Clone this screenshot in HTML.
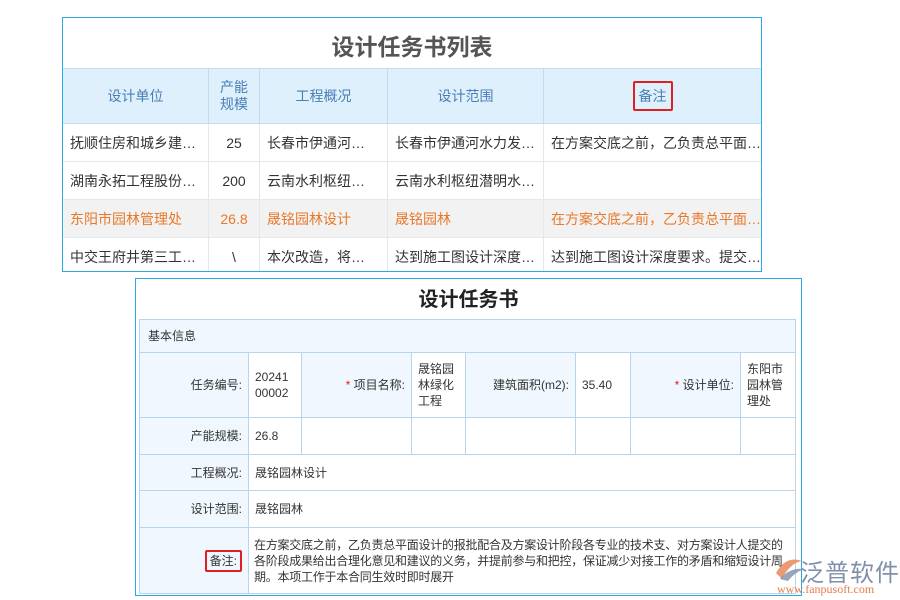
<!DOCTYPE html>
<html><head><meta charset="utf-8"><style>
*{margin:0;padding:0;box-sizing:border-box}
body{width:900px;height:600px;background:#fff;position:relative;overflow:hidden;font-family:"Liberation Sans","Noto Sans CJK SC",sans-serif;font-size:13px;color:#333}
.abs{position:absolute}
.p1{left:62px;top:17px;width:700px;height:255px;border:1px solid #29a8e6;overflow:hidden}
.t1{position:absolute;left:0;right:0;top:10px;text-align:center;font-size:23px;font-weight:bold;color:#555}
table{border-collapse:collapse;position:absolute}
.tb1{left:-1px;top:50px;width:699px;table-layout:fixed;font-size:14px}
.tb1 td{border:1px solid #e3e8ee;padding:0 7px;white-space:nowrap;overflow:hidden}
.tb1 tr.h td{background:#dff0fd;color:#4a7eb5;text-align:center;height:55px;border-color:#c4dcf0}
.tb1 tr.r td{height:38px}
.tb1 tr.o td{background:#f2f2f2;color:#e8792a}
.c{text-align:center}
.p2{left:135px;top:278px;width:667px;height:318px;border:1px solid #29a8e6}
.t2{position:absolute;left:0;right:0;top:4px;text-align:center;font-size:20px;font-weight:bold;color:#222}
.tb2{left:3px;top:40px;width:656px;table-layout:fixed}
.tb2 td{border:1px solid #b9d5ee;padding:0 6px;font-size:12px;vertical-align:middle;line-height:16px}
.tb2 td.l{background:#f0f7fe;text-align:right}
.s{color:#e02020}
.red{border:2px solid #e02020;border-radius:2px;padding:1px 4px}
</style></head><body>
<div class="abs p1">
<div class="t1">设计任务书列表</div>
<table class="tb1">
<colgroup><col style="width:146px"><col style="width:51px"><col style="width:128px"><col style="width:156px"><col style="width:218px"></colgroup>
<tr class="h"><td>设计单位</td><td style="line-height:17px;padding:0">产能<br>规模</td><td>工程概况</td><td>设计范围</td><td><span class="red" style="padding:5px 4px">备注</span></td></tr>
<tr class="r"><td>抚顺住房和城乡建…</td><td class="c">25</td><td>长春市伊通河…</td><td>长春市伊通河水力发…</td><td>在方案交底之前，乙负责总平面…</td></tr>
<tr class="r"><td>湖南永拓工程股份…</td><td class="c">200</td><td>云南水利枢纽…</td><td>云南水利枢纽潜明水…</td><td></td></tr>
<tr class="r o"><td>东阳市园林管理处</td><td class="c">26.8</td><td>晟铭园林设计</td><td>晟铭园林</td><td>在方案交底之前，乙负责总平面…</td></tr>
<tr class="r"><td style="height:34px">中交王府井第三工…</td><td class="c">\</td><td>本次改造，将…</td><td>达到施工图设计深度…</td><td>达到施工图设计深度要求。提交…</td></tr>
</table>
</div>
<div class="abs p2">
<div class="t2">设计任务书</div>
<table class="tb2">
<colgroup><col style="width:109px"><col style="width:53px"><col style="width:110px"><col style="width:54px"><col style="width:110px"><col style="width:55px"><col style="width:110px"><col style="width:55px"></colgroup>
<tr><td colspan="8" style="background:#f0f7fe;height:33px;padding-left:8px">基本信息</td></tr>
<tr style="height:65px"><td class="l">任务编号:</td><td>20241<br>00002</td><td class="l"><span class="s">*</span> 项目名称:</td><td>晟铭园<br>林绿化<br>工程</td><td class="l">建筑面积(m2):</td><td>35.40</td><td class="l"><span class="s">*</span> 设计单位:</td><td>东阳市<br>园林管<br>理处</td></tr>
<tr style="height:37px"><td class="l">产能规模:</td><td>26.8</td><td></td><td></td><td></td><td></td><td></td><td></td></tr>
<tr style="height:36px"><td class="l">工程概况:</td><td colspan="7">晟铭园林设计</td></tr>
<tr style="height:37px"><td class="l">设计范围:</td><td colspan="7">晟铭园林</td></tr>
<tr style="height:66px"><td class="l"><span class="red" style="padding:2px 3px">备注:</span></td><td colspan="7" style="line-height:16px;padding:0 3px 0 5px;letter-spacing:-0.25px">在方案交底之前，乙负责总平面设计的报批配合及方案设计阶段各专业的技术支、对方案设计人提交的各阶段成果给出合理化意见和建议的义务，并提前参与和把控，保证减少对接工作的矛盾和缩短设计周期。本项工作于本合同生效时即时展开</td></tr>
</table>
</div>
<div class="abs" style="left:772px;top:553px;width:34px;height:30px">
<svg width="34" height="30"><path d="M4 20 Q14 2 30 8 Q18 10 10 26Z" fill="#e88a5a" opacity=".85"/><path d="M8 26 Q18 14 32 16 Q22 20 16 28Z" fill="#7f8fa8" opacity=".8"/></svg></div>
<div class="abs" style="left:800px;top:553px;font-size:24px;color:#8090aa;letter-spacing:1px">泛普软件</div>
<div class="abs" style="left:777px;top:582px;font-size:12px;color:#e87a4a;font-family:'Liberation Serif',serif">www.fanpusoft.com</div>
</body></html>
